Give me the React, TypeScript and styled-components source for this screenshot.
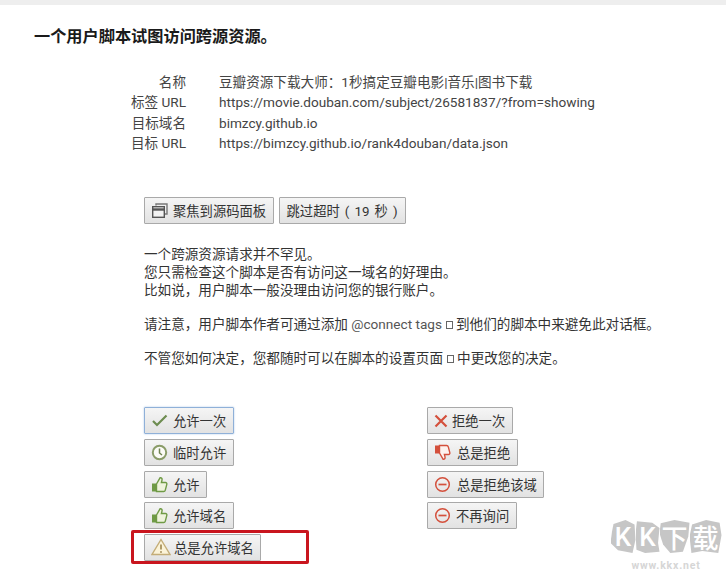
import React from 'react';
import styled, { createGlobalStyle } from 'styled-components';

const GlobalStyle = createGlobalStyle`
  html, body {
    margin: 0;
    padding: 0;
    background: #fff;
    overflow: hidden;
  }
  body {
    font-family: Roboto, "Noto Sans CJK SC", sans-serif;
    font-size: 13.6px;
    color: #333;
  }
`;

const Page = styled.div`
  position: relative;
  width: 726px;
  height: 573px;
  overflow: hidden;
  border-top: 5px solid #eeeeee;
  box-sizing: border-box;
  padding: 20px 0 0 34px;
`;

const Title = styled.h1`
  margin: 0;
  font-size: 16.2px;
  line-height: 24px;
  font-weight: 700;
  color: #1a1a1a;
`;

const InfoTable = styled.div`
  display: grid;
  grid-template-columns: 152px auto;
  column-gap: 33px;
  margin-top: 23px;
  line-height: 20.3px;
  justify-content: start;
  color: #444;
`;

const InfoLabel = styled.div`
  text-align: right;
`;

const Body = styled.div`
  padding-left: 110px;
`;

const ButtonRow = styled.div`
  display: flex;
  gap: 5px;
  margin-top: 44px;
`;

const Btn = styled.button<{ $focused?: boolean; $gap?: number; $plain?: boolean }>`
  display: inline-flex;
  align-items: center;
  height: 27px;
  box-sizing: border-box;
  padding: 0 ${(p) => (p.$plain ? '7px' : '6.5px')} 0 ${(p) => (p.$plain ? '7px' : '6px')};
  gap: ${(p) => p.$gap ?? 5}px;
  font: inherit;
  font-size: 13.3px;
  word-spacing: ${(p) => (p.$plain ? '1.8px' : '0')};
  color: #333;
  white-space: nowrap;
  background: linear-gradient(#f5f5f5, #e2e2e2);
  border: 1px solid ${(p) => (p.$focused ? '#8fb0d8' : '#a9a9a9')};
  border-radius: 1px;
  box-shadow: ${(p) => (p.$focused ? '0 0 2px #a8c4e6' : 'none')};
`;

const Notes = styled.div`
  margin-top: 21px;
  line-height: 18px;
  color: #333;
`;

const Note = styled.p`
  margin: 0 0 16px;
`;

const TagLink = styled.span`
  color: #555;
`;

const LinkMark = styled.span`
  display: inline-block;
  width: 5px;
  height: 6px;
  margin: 0 3px 0 4px;
  border: 1px solid #666;
`;

const Actions = styled.div`
  display: grid;
  grid-template-columns: 283px auto;
  justify-content: start;
  margin-top: 40px;
`;

const ActionColumn = styled.div`
  display: flex;
  flex-direction: column;
  align-items: flex-start;
  gap: 4.7px;
`;

const Highlight = styled.div`
  position: absolute;
  left: 131px;
  top: 525px;
  width: 178px;
  height: 34px;
  box-sizing: border-box;
  border: 3px solid #c9151e;
  border-radius: 2px;
`;

const Watermark = styled.div`
  position: absolute;
  left: 610px;
  top: 515px;
  width: 112px;
  display: flex;
  flex-direction: column;
  align-items: center;
`;

const LogoRow = styled.div`
  display: flex;
  height: 33px;
`;

const LogoTile = styled.div<{ $width: number; $shape: string }>`
  width: ${(p) => p.$width}px;
  display: flex;
  align-items: center;
  justify-content: center;
  font-size: 26px;
  font-weight: 500;
  color: #fff;
  background: #c6c6c6;
  clip-path: polygon(${(p) => p.$shape});
`;

const WatermarkUrl = styled.div`
  margin-top: 7px;
  font-size: 10.5px;
  line-height: 12px;
  font-weight: 700;
  letter-spacing: 0.8px;
  color: #d6d6d6;
`;

const info = [
  ['名称', '豆瓣资源下载大师：1秒搞定豆瓣电影|音乐|图书下载'],
  ['标签 URL', 'https://movie.douban.com/subject/26581837/?from=showing'],
  ['目标域名', 'bimzcy.github.io'],
  ['目标 URL', 'https://bimzcy.github.io/rank4douban/data.json'],
];

const tiles = [
  { text: 'K', width: 25, shape: '12% 12%, 60% 0, 96% 14%, 100% 60%, 88% 100%, 30% 92%, 0 70%, 6% 35%' },
  { text: 'K', width: 24, shape: '6% 4%, 70% 8%, 100% 24%, 94% 70%, 100% 96%, 40% 100%, 4% 90%, 0 40%' },
  { text: '下', width: 30, shape: '4% 10%, 50% 0, 100% 8%, 96% 50%, 78% 96%, 36% 100%, 12% 74%, 0 40%' },
  { text: '载', width: 32, shape: '8% 14%, 52% 0, 94% 8%, 100% 46%, 90% 100%, 40% 94%, 6% 100%, 0 50%' },
];

const IconSvg = styled.svg`
  flex: none;
  display: block;
`;

const green = '#6d8c50';
const red = '#d4503c';

const WindowsIcon = () => (
  <IconSvg width="17" height="17" viewBox="0 0 17 17" fill="none">
    <path d="M5 3.500V2h11v10h-2" stroke="#777" strokeWidth="1.400" />
    <rect x="1.700" y="4.700" width="11.600" height="10.600" stroke="#555" strokeWidth="1.400" fill="#f2f2f2" />
    <path d="M1.700 7.500h11.600" stroke="#555" strokeWidth="2.400" />
  </IconSvg>
);

const CheckIcon = () => (
  <IconSvg width="17" height="17" viewBox="0 0 17 17" fill="none">
    <path d="M2 9l4 4 9.500-9.500" stroke={green} strokeWidth="2.200" />
  </IconSvg>
);

const ClockIcon = () => (
  <IconSvg width="17" height="17" viewBox="0 0 17 17" fill="none">
    <circle cx="8.500" cy="8.500" r="6.700" stroke="#8a9c68" strokeWidth="2" fill="#fbfbf6" />
    <path d="M8.500 4.500v4.500l2.500 2" stroke="#6f8350" strokeWidth="1.500" />
  </IconSvg>
);

const ThumbUpIcon = () => (
  <IconSvg width="17" height="17" viewBox="0 0 17 17">
    <rect x="1" y="7.500" width="4.500" height="8" fill="#6f9a45" />
    <path
      d="M5.500 8L9 1.800c1.500-.3 2.400.8 2 2.400L10.400 6.500h4.100c1 0 1.600.9 1.300 1.900l-1.500 5.700c-.2.800-.8 1.400-1.700 1.400H5.500z"
      fill="#eef3dc"
      stroke="#6f9a45"
      strokeWidth="1.400"
    />
  </IconSvg>
);

const WarningIcon = () => (
  <IconSvg width="20" height="18" viewBox="0 0 20 18">
    <path d="M10 1.500L19 16.500H1z" fill="#fbf3d8" stroke="#c4ad78" strokeWidth="1.400" />
    <path d="M10 6.500v5" stroke="#a8925e" strokeWidth="1.800" />
    <circle cx="10" cy="14" r="1" fill="#a8925e" />
  </IconSvg>
);

const CrossIcon = () => (
  <IconSvg width="14" height="17" viewBox="0 0 14 17" fill="none">
    <path d="M1.500 3.500l11 11M12.500 3.500l-11 11" stroke={red} strokeWidth="2.200" />
  </IconSvg>
);

const ThumbDownIcon = () => (
  <IconSvg width="17" height="17" viewBox="0 0 17 17">
    <rect x="1" y="1.500" width="4.500" height="8" fill={red} />
    <path
      d="M5.500 9L9 15.200c1.500.3 2.400-.8 2-2.400l-.6-2.300h4.100c1 0 1.600-.9 1.300-1.900L14.300 2.900c-.2-.8-.8-1.400-1.700-1.400H5.500z"
      fill="#fdf2ee"
      stroke={red}
      strokeWidth="1.400"
    />
  </IconSvg>
);

const MinusIcon = () => (
  <IconSvg width="17" height="17" viewBox="0 0 17 17" fill="none">
    <circle cx="8.500" cy="8.500" r="6.800" stroke={red} strokeWidth="1.500" />
    <path d="M4.500 8.500h8" stroke={red} strokeWidth="1.700" />
  </IconSvg>
);

const App: React.FC = function () {
  return (
    <Page>
      <GlobalStyle />
      <Title>一个用户脚本试图访问跨源资源。</Title>
      <InfoTable>
        {info.map(([label, value]) => (
          <React.Fragment key={label}>
            <InfoLabel>{label}</InfoLabel>
            <div>{value}</div>
          </React.Fragment>
        ))}
      </InfoTable>
      <Body>
        <ButtonRow>
          <Btn>
            <WindowsIcon />
            聚焦到源码面板
          </Btn>
          <Btn $plain>跳过超时 ( 19 秒 )</Btn>
        </ButtonRow>
        <Notes>
          <Note>
            一个跨源资源请求并不罕见。
            <br />
            您只需检查这个脚本是否有访问这一域名的好理由。
            <br />
            比如说，用户脚本一般没理由访问您的银行账户。
          </Note>
          <Note>
            请注意，用户脚本作者可通过添加 <TagLink>@connect tags</TagLink>
            <LinkMark />
            到他们的脚本中来避免此对话框。
          </Note>
          <Note>
            不管您如何决定，您都随时可以在脚本的设置页面
            <LinkMark />
            中更改您的决定。
          </Note>
        </Notes>
        <Actions>
          <ActionColumn>
            <Btn $focused>
              <CheckIcon />
              允许一次
            </Btn>
            <Btn>
              <ClockIcon />
              临时允许
            </Btn>
            <Btn>
              <ThumbUpIcon />
              允许
            </Btn>
            <Btn>
              <ThumbUpIcon />
              允许域名
            </Btn>
            <Btn $gap={3}>
              <WarningIcon />
              总是允许域名
            </Btn>
          </ActionColumn>
          <ActionColumn>
            <Btn $gap={4}>
              <CrossIcon />
              拒绝一次
            </Btn>
            <Btn $gap={6}>
              <ThumbDownIcon />
              总是拒绝
            </Btn>
            <Btn $gap={6}>
              <MinusIcon />
              总是拒绝该域
            </Btn>
            <Btn>
              <MinusIcon />
              不再询问
            </Btn>
          </ActionColumn>
        </Actions>
      </Body>
      <Highlight />
      <Watermark>
        <LogoRow>
          {tiles.map((tile, index) => (
            <LogoTile key={index} $width={tile.width} $shape={tile.shape}>
              {tile.text}
            </LogoTile>
          ))}
        </LogoRow>
        <WatermarkUrl>www.kkx.net</WatermarkUrl>
      </Watermark>
    </Page>
  );
};

export default App;
